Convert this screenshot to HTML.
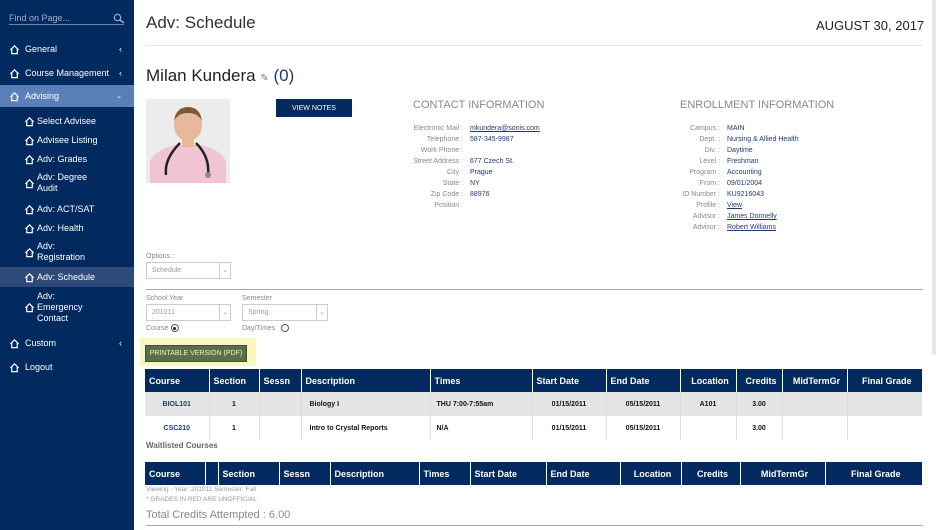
<!DOCTYPE html>
<html><head><meta charset="utf-8"><style>
*{margin:0;padding:0;box-sizing:border-box}
body{width:936px;height:530px;overflow:hidden;background:#fff;font-family:"Liberation Sans",Arial,sans-serif;position:relative}
.a{position:absolute}
#sb{left:0;top:0;width:134px;height:530px;background:#022a5f;color:#fff;font-size:9px}
.nav{position:absolute;left:0;width:134px;display:flex;align-items:center}
.nav svg{flex:none}
.chev{position:absolute;right:12px;font-size:9px}
.k{position:absolute;text-align:right;font-size:7px;color:#888}
.v{position:absolute;font-size:7px;color:#1f3a73}
.u{text-decoration:underline}
table{border-collapse:collapse;table-layout:fixed;position:absolute}
th{background:#022a5f;color:#fff;font-size:9px;font-weight:bold;text-align:left;padding-left:4px;border-left:1px solid #fff;height:23px}
td{font-size:7px;font-weight:bold;color:#111;border-left:1px solid #ddd;height:24px;text-align:center}
.sel{position:absolute;border:1px solid #ccc;height:17px;font-size:7px;color:#999;padding:4px 5px}
.sel b{position:absolute;right:0;top:0;width:11px;height:15px;border-left:1px solid #ccc;font-weight:normal;font-size:7px;text-align:center;line-height:15px}
</style></head><body>
<svg width="0" height="0" style="position:absolute"><defs><symbol id="h" viewBox="0 0 12 12"><path d="M1.5 6.5 L6 2 L10.5 6.5 M3 5.2 V10.5 H9 V5.2" fill="none" stroke="#fff" stroke-width="1.3"/></symbol></defs></svg>
<div id="sb" class="a">
 <div class="a" style="left:9px;top:13px;font-size:9px;color:#9fb0cc">Find on Page...</div>
 <svg class="a" style="left:113px;top:13px" width="12" height="11" viewBox="0 0 12 11"><circle cx="4.5" cy="4.5" r="3.2" fill="none" stroke="#9fb0cc" stroke-width="1.2"/><path d="M7 7 L11 10" stroke="#9fb0cc" stroke-width="1.5"/></svg>
 <div class="a" style="left:9px;top:24px;width:115px;height:1px;background:#6d84aa"></div>
 <div class="nav" style="top:42px;height:14px"><svg style="margin-left:9px;margin-right:5px" width="11" height="11"><use href="#h"/></svg>General<span class="chev">‹</span></div>
 <div class="nav" style="top:66px;height:14px"><svg style="margin-left:9px;margin-right:5px" width="11" height="11"><use href="#h"/></svg>Course Management<span class="chev">‹</span></div>
 <div class="nav" style="top:85px;height:22px;background:#5b80b9"><svg style="margin-left:9px;margin-right:5px" width="11" height="11"><use href="#h"/></svg>Advising<span class="chev" style="font-size:7px">⌄</span></div>
 <div class="nav" style="top:114px;height:14px"><svg style="margin-left:24px;margin-right:2px" width="11" height="11"><use href="#h"/></svg>Select Advisee</div>
 <div class="nav" style="top:133px;height:14px"><svg style="margin-left:24px;margin-right:2px" width="11" height="11"><use href="#h"/></svg>Advisee Listing</div>
 <div class="nav" style="top:152px;height:14px"><svg style="margin-left:24px;margin-right:2px" width="11" height="11"><use href="#h"/></svg>Adv: Grades</div>
 <div class="nav" style="top:172px;height:22px"><svg style="margin-left:24px;margin-right:2px" width="11" height="11"><use href="#h"/></svg><span style="line-height:11px">Adv: Degree<br>Audit</span></div>
 <div class="nav" style="top:202px;height:14px"><svg style="margin-left:24px;margin-right:2px" width="11" height="11"><use href="#h"/></svg>Adv: ACT/SAT</div>
 <div class="nav" style="top:221px;height:14px"><svg style="margin-left:24px;margin-right:2px" width="11" height="11"><use href="#h"/></svg>Adv: Health</div>
 <div class="nav" style="top:241px;height:22px"><svg style="margin-left:24px;margin-right:2px" width="11" height="11"><use href="#h"/></svg><span style="line-height:11px">Adv:<br>Registration</span></div>
 <div class="nav" style="top:267px;height:20px;background:#2d4a79"><svg style="margin-left:24px;margin-right:2px" width="11" height="11"><use href="#h"/></svg>Adv: Schedule</div>
 <div class="nav" style="top:291px;height:33px"><svg style="margin-left:24px;margin-right:2px" width="11" height="11"><use href="#h"/></svg><span style="line-height:11px">Adv:<br>Emergency<br>Contact</span></div>
 <div class="nav" style="top:336px;height:14px"><svg style="margin-left:9px;margin-right:5px" width="11" height="11"><use href="#h"/></svg>Custom<span class="chev">‹</span></div>
 <div class="nav" style="top:360px;height:14px"><svg style="margin-left:9px;margin-right:5px" width="11" height="11"><use href="#h"/></svg>Logout</div>
</div>
<div class="a" style="left:932px;top:0;width:4px;height:355px;background:#e8e8e8"></div>

<div class="a" style="left:146px;top:13px;font-size:17px;color:#333">Adv: Schedule</div>
<div class="a" style="left:816px;top:18px;font-size:13px;color:#222">AUGUST 30, 2017</div>
<div class="a" style="left:146px;top:45px;width:777px;height:1px;background:#e6e6e6"></div>
<div class="a" style="left:146px;top:66px;font-size:17px;color:#222">Milan Kundera <span style="font-size:10px;color:#777">✎</span> <span style="color:#1f3a73">(0)</span></div>

<svg class="a" style="left:146px;top:99px" width="84" height="84" viewBox="0 0 84 84"><rect width="84" height="84" fill="#ececec"/><path d="M4 84 V62 Q10 50 30 46 L54 46 Q74 50 80 62 V84Z" fill="#f0c4d4"/><ellipse cx="42" cy="26" rx="14" ry="16" fill="#e8b89c"/><path d="M28 22 Q30 8 42 8 Q54 8 56 22 Q52 14 42 14 Q32 14 28 22Z" fill="#7a5a3a"/><rect x="36" y="38" width="12" height="10" fill="#e8b89c"/><path d="M34 44 Q18 60 20 76 M50 44 Q64 58 62 76" fill="none" stroke="#222" stroke-width="2.5"/><circle cx="62" cy="76" r="3" fill="#888"/></svg>
<div class="a" style="left:276px;top:99px;width:76px;height:18px;background:#022a5f;color:#fff;font-size:7px;display:flex;align-items:center;justify-content:center">VIEW NOTES</div>

<div class="a" style="left:413px;top:99px;font-size:11px;color:#888">CONTACT INFORMATION</div>
<div class="a" style="left:680px;top:99px;font-size:11px;color:#888">ENROLLMENT INFORMATION</div>
<div class="k" style="left:380px;width:83px;top:123px;line-height:11px">Electronic Mail :<br>Telephone :<br>Work Phone :<br>Street Address :<br>City :<br>State :<br>Zip Code :<br>Position :</div>
<div class="v" style="left:470px;top:123px;line-height:11px"><span class="u">mkundera@sonis.com</span><br>587-345-9987<br>&nbsp;<br>677 Czech St.<br>Prague<br>NY<br>88976</div>
<div class="k" style="left:640px;width:80px;top:123px;line-height:11px">Campus :<br>Dept. :<br>Div. :<br>Level :<br>Program :<br>From :<br>ID Number :<br>Profile :<br>Advisor :<br>Advisor :</div>
<div class="v" style="left:727px;top:123px;line-height:11px">MAIN<br>Nursing &amp; Allied Health<br>Daytime<br>Freshman<br>Accounting<br>09/01/2004<br>KU9216043<br><span class="u">View</span><br><span class="u">James Donnelly</span><br><span class="u">Robert Williams</span></div>

<div class="a" style="left:146px;top:253px;font-size:7px;color:#888">Options :</div>
<div class="sel" style="left:146px;top:262px;width:85px">Schedule<b>⌄</b></div>
<div class="a" style="left:146px;top:289px;width:777px;height:1px;background:#aaa"></div>
<div class="a" style="left:146px;top:295px;font-size:7px;color:#888">School Year</div>
<div class="a" style="left:242px;top:295px;font-size:7px;color:#888">Semester</div>
<div class="sel" style="left:146px;top:304px;width:85px">201011<b>⌄</b></div>
<div class="sel" style="left:242px;top:304px;width:86px">Spring<b>⌄</b></div>
<div class="a" style="left:146px;top:324px;font-size:7px;color:#888">Course <span style="display:inline-block;width:8px;height:8px;border:1px solid #555;border-radius:50%;vertical-align:middle;position:relative"><span style="position:absolute;left:1.5px;top:1.5px;width:3px;height:3px;border-radius:50%;background:#222"></span></span></div>
<div class="a" style="left:242px;top:324px;font-size:7px;color:#888">Day/Times <span style="display:inline-block;width:8px;height:8px;border:1px solid #555;border-radius:50%;vertical-align:middle;margin-left:4px"></span></div>
<div class="a" style="left:140px;top:338px;width:116px;height:28px;background:#f8f7bd"></div>
<div class="a" style="left:145px;top:345px;width:102px;height:17px;background:#58704a;border:1px solid #3e5434;color:#f4f2c0;font-size:7px;text-align:center;line-height:15px">PRINTABLE VERSION (PDF)</div>

<table style="left:145px;top:369px;width:777px">
<colgroup><col style="width:64px"><col style="width:50px"><col style="width:42px"><col style="width:129px"><col style="width:102px"><col style="width:74px"><col style="width:74px"><col style="width:56px"><col style="width:46px"><col style="width:65px"><col style="width:75px"></colgroup>
<tr><th style="border-left:0">Course</th><th>Section</th><th>Sessn</th><th>Description</th><th>Times</th><th>Start Date</th><th>End Date</th><th style="text-align:center">Location</th><th style="text-align:center">Credits</th><th style="text-align:center">MidTermGr</th><th style="text-align:center">Final Grade</th></tr>
<tr style="background:#e5e5e5"><td style="border-left:0;color:#1f3a73">BIOL101</td><td>1</td><td></td><td style="text-align:left;padding-left:8px">Biology I</td><td style="text-align:left;padding-left:6px">THU 7:00-7:55am</td><td>01/15/2011</td><td>05/15/2011</td><td>A101</td><td>3.00</td><td></td><td></td></tr>
<tr><td style="border-left:0;color:#1f3a73">CSC210</td><td>1</td><td></td><td style="text-align:left;padding-left:8px">Intro to Crystal Reports</td><td style="text-align:left;padding-left:6px">N/A</td><td>01/15/2011</td><td>05/15/2011</td><td></td><td>3.00</td><td></td><td></td></tr>
</table>
<div class="a" style="left:146px;top:441px;font-size:8px;font-weight:bold;color:#666">Waitlisted Courses</div>
<table style="left:145px;top:462px;width:777px">
<colgroup><col style="width:60px"><col style="width:13px"><col style="width:61px"><col style="width:51px"><col style="width:89px"><col style="width:51px"><col style="width:76px"><col style="width:74px"><col style="width:61px"><col style="width:59px"><col style="width:85px"><col style="width:97px"></colgroup>
<tr><th style="border-left:0">Course</th><th></th><th>Section</th><th>Sessn</th><th>Description</th><th>Times</th><th>Start Date</th><th>End Date</th><th style="text-align:center">Location</th><th style="text-align:center">Credits</th><th style="text-align:center">MidTermGr</th><th style="text-align:center">Final Grade</th></tr>
</table>
<div class="a" style="left:146px;top:486px;font-size:6.5px;color:#999">Viewing - Year :201011 Semester: Fall</div>
<div class="a" style="left:146px;top:496px;font-size:6.5px;color:#999">* GRADES IN RED ARE UNOFFICIAL</div>
<div class="a" style="left:146px;top:509px;font-size:11px;color:#888">Total Credits Attempted : 6.00</div>
<div class="a" style="left:146px;top:525px;width:777px;height:1px;background:#aaa"></div>
</body></html>
